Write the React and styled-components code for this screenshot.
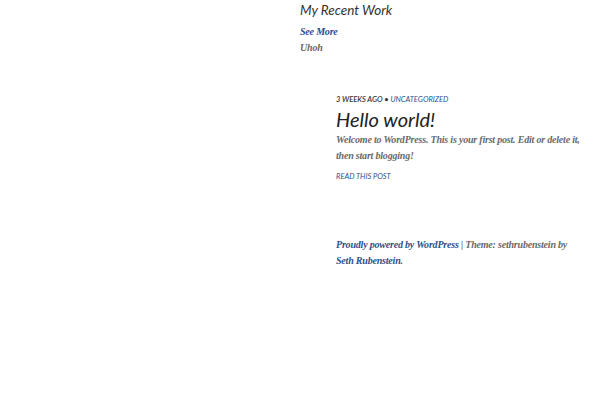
import React from "react";
import styled, { createGlobalStyle } from "styled-components";

const Global = createGlobalStyle`
  html, body { margin: 0; padding: 0; background: #fff; }
  body { font-family: "Liberation Serif", serif; }
  a { text-decoration: none; }
`;

const Page = styled.div`
  display: grid;
  grid-template-columns: 300px 1fr;
  width: 600px;
  min-height: 400px;
`;

const Sidebar = styled.aside``;

const Main = styled.main`
  display: flex;
  flex-direction: column;
  padding-top: 1px;
`;

const WorkSection = styled.section`
  display: flex;
  flex-direction: column;
`;

const SectionTitle = styled.h2`
  margin: 0;
  font-family: Lato, sans-serif;
  font-style: italic;
  font-weight: normal;
  font-size: 13.5px;
  line-height: 18px;
  color: #333;
`;

const SerifText = styled.p`
  margin: 0;
  font-family: "Liberation Serif", serif;
  font-style: italic;
  font-weight: bold;
  font-size: 10px;
  letter-spacing: -0.2px;
  line-height: 16px;
  color: ${(p) => (p.$link ? "#2b4f8e" : "#6a6a6a")};
`;

const SeeMore = styled(SerifText)`
  margin-top: 5px;
`;

const Post = styled.article`
  margin-top: 38px;
  padding: 0 16px 0 36px;
  display: flex;
  flex-direction: column;
`;

const Meta = styled.div`
  font-family: Lato, sans-serif;
  font-style: italic;
  font-weight: 600;
  font-size: 7.5px;
  line-height: 12px;
  text-transform: uppercase;
  color: #333;
`;

const MetaLink = styled.a`
  font-weight: normal;
  color: #2b4f8e;
`;

const PostTitle = styled.h1`
  margin: 1px 0 0;
  font-family: Lato, sans-serif;
  font-style: italic;
  font-weight: normal;
  font-size: 20px;
  line-height: 24px;
  color: #222;
`;

const Excerpt = styled(SerifText)`
  margin-top: 1px;
`;

const ReadMore = styled.a`
  margin-top: 7px;
  font-family: Lato, sans-serif;
  font-style: italic;
  font-size: 7.5px;
  line-height: 12px;
  text-transform: uppercase;
  color: #2b4f8e;
`;

const Footer = styled.footer`
  margin-top: 54px;
  padding: 0 24px 0 36px;
`;

const Link = styled.a`
  color: #2b4f8e;
`;

export default function App() {
  return (
    <>
      <Global />
      <Page>
        <Sidebar />
        <Main>
          <WorkSection>
            <SectionTitle>My Recent Work</SectionTitle>
            <SeeMore $link>See More</SeeMore>
            <SerifText>Uhoh</SerifText>
          </WorkSection>
          <Post>
            <Meta>
              3 weeks ago • <MetaLink href="#">Uncategorized</MetaLink>
            </Meta>
            <PostTitle>Hello world!</PostTitle>
            <Excerpt>
              Welcome to WordPress. This is your first post. Edit or delete it,
              then start blogging!
            </Excerpt>
            <ReadMore href="#">Read this post</ReadMore>
          </Post>
          <Footer>
            <SerifText>
              <Link href="#">Proudly powered by WordPress</Link> | Theme:
              sethrubenstein by <Link href="#">Seth Rubenstein</Link>.
            </SerifText>
          </Footer>
        </Main>
      </Page>
    </>
  );
}
